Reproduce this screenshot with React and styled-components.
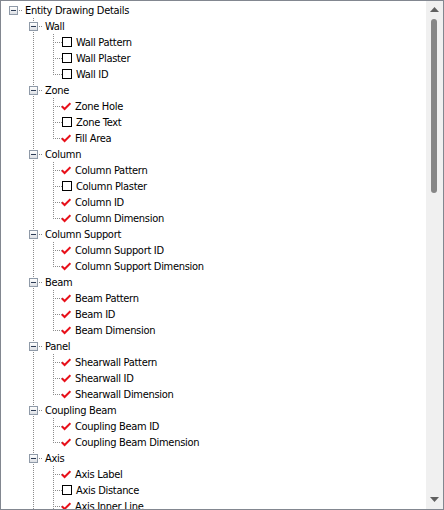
import React from "react";
import styled, { createGlobalStyle, css } from "styled-components";

const tree = {
	label: "Entity Drawing Details",
	children: [
		{
			label: "Wall",
			children: [
				{ label: "Wall Pattern", checked: false },
				{ label: "Wall Plaster", checked: false },
				{ label: "Wall ID", checked: false },
			],
		},
		{
			label: "Zone",
			children: [
				{ label: "Zone Hole", checked: true },
				{ label: "Zone Text", checked: false },
				{ label: "Fill Area", checked: true },
			],
		},
		{
			label: "Column",
			children: [
				{ label: "Column Pattern", checked: true },
				{ label: "Column Plaster", checked: false },
				{ label: "Column ID", checked: true },
				{ label: "Column Dimension", checked: true },
			],
		},
		{
			label: "Column Support",
			children: [
				{ label: "Column Support ID", checked: true },
				{ label: "Column Support Dimension", checked: true },
			],
		},
		{
			label: "Beam",
			children: [
				{ label: "Beam Pattern", checked: true },
				{ label: "Beam ID", checked: true },
				{ label: "Beam Dimension", checked: true },
			],
		},
		{
			label: "Panel",
			children: [
				{ label: "Shearwall Pattern", checked: true },
				{ label: "Shearwall ID", checked: true },
				{ label: "Shearwall Dimension", checked: true },
			],
		},
		{
			label: "Coupling Beam",
			children: [
				{ label: "Coupling Beam ID", checked: true },
				{ label: "Coupling Beam Dimension", checked: true },
			],
		},
		{
			label: "Axis",
			children: [
				{ label: "Axis Label", checked: true },
				{ label: "Axis Distance", checked: false },
				{ label: "Axis Inner Line", checked: true },
				{ label: "Axis Bubble", checked: true },
			],
		},
		{
			label: "Dimension",
			children: [{ label: "Dimension Text", checked: true }],
		},
	],
};

// flatten the tree into rows, remembering which ancestors still have siblings below
const flatten = (node, depth = 0, lasts = [], isLast = true, out = []) => {
	out.push({ node, depth, lasts, isLast });
	(node.children || []).forEach((child, i, arr) => {
		const last = i === arr.length - 1;
		flatten(child, depth + 1, depth === 0 ? [] : [...lasts, isLast], last, out);
	});
	return out;
};

const GlobalStyle = createGlobalStyle`
	html, body {
		margin: 0;
		padding: 0;
		background: #ffffff;
	}
	body {
		font-family: "DejaVu Sans Condensed", "Liberation Sans", sans-serif;
	}
`;

const DOT = "#8c8c8c";

const Frame = styled.div`
	width: 444px;
	height: 510px;
	box-sizing: border-box;
	border: 1px solid #828790;
	display: flex;
	background: #ffffff;
	overflow: hidden;
`;

const Tree = styled.div`
	flex: 1;
	display: flex;
	flex-direction: column;
	padding: 1px 0 0 2px;
	overflow: hidden;
`;

const Row = styled.div`
	display: flex;
	align-items: center;
	height: 16px;
	flex-shrink: 0;
	white-space: nowrap;
`;

const vertical = css`
	content: "";
	position: absolute;
	left: 10px;
	width: 1px;
	background-image: linear-gradient(${DOT} 50%, transparent 50%);
	background-size: 1px 2px;
`;

const Cell = styled.div`
	position: relative;
	width: 20px;
	height: 16px;
	flex-shrink: 0;

	&::before {
		${({ $line }) => ($line ? vertical : "display: none;")}
		top: 0;
		height: ${({ $line }) => ($line === "half" ? "9px" : "16px")};
	}

	&::after {
		content: "";
		display: ${({ $right }) => ($right ? "block" : "none")};
		position: absolute;
		top: 8px;
		left: 11px;
		width: 9px;
		height: 1px;
		background-image: linear-gradient(to right, transparent 50%, ${DOT} 50%);
		background-size: 2px 1px;
	}
`;

const Expander = styled.div`
	position: absolute;
	left: 6px;
	top: 4px;
	width: 9px;
	height: 9px;
	box-sizing: border-box;
	border: 1px solid #8f9aa8;
	background: linear-gradient(#ffffff, #dcdfe4);
	z-index: 1;

	&::after {
		content: "";
		position: absolute;
		left: 1px;
		top: 3px;
		width: 5px;
		height: 1px;
		background: #2d3c55;
	}
`;

const CheckBox = styled.div`
	width: 10px;
	height: 10px;
	box-sizing: border-box;
	margin-left: -1px;
	border: 1px solid #000000;
	background: #ffffff;
	flex-shrink: 0;
`;

const Tick = styled.svg`
	width: 10px;
	height: 10px;
	margin-left: -2px;
	flex-shrink: 0;
`;

const Label = styled.span`
	font-size: 11px;
	letter-spacing: -0.3px;
	color: #000000;
	line-height: 15px;
	padding-top: 1px;
	margin-left: ${({ $leaf }) => ($leaf ? "4px" : "2px")};
`;

const ScrollBar = styled.div`
	width: 17px;
	flex-shrink: 0;
	background: #f0f0f0;
	display: flex;
	flex-direction: column;
`;

const ArrowButton = styled.div`
	height: 17px;
	flex-shrink: 0;
	display: flex;
	justify-content: center;
	align-items: flex-start;
	padding-top: ${({ $down }) => ($down ? "5px" : "6px")};
	box-sizing: border-box;
`;

const Track = styled.div`
	flex: 1;
	padding: 1px 0 0 5px;
`;

const Thumb = styled.div`
	width: 6px;
	height: 174px;
	border-radius: 3px;
	background: #868686;
`;

const Arrow = ({ down }) => (
	<svg width="9" height="5" viewBox="0 0 9 5">
		<polygon
			points={down ? "0,0 9,0 4.5,5" : "4.5,0 9,5 0,5"}
			fill="#606060"
		/>
	</svg>
);

const TreeRow = ({ node, depth, lasts, isLast }) => {
	const hasKids = !!node.children;
	const guides = [];

	// the root column has no line of its own
	if (depth > 0) guides.push(<Cell key="root" />);
	lasts.forEach((last, i) => {
		guides.push(<Cell key={i} $line={last ? undefined : "full"} />);
	});

	const own =
		depth === 0 ? (
			<Cell key="own" $right>
				<Expander />
			</Cell>
		) : (
			<Cell key="own" $line={isLast ? "half" : "full"} $right>
				{hasKids && <Expander />}
			</Cell>
		);

	return (
		<Row>
			{guides}
			{own}
			{!hasKids &&
				(node.checked ? (
					<Tick viewBox="0 0 10 10">
						<path
							d="M0.8 5.2 L3.6 8 L9.4 2.2"
							fill="none"
							stroke="#e8101a"
							strokeWidth="2"
						/>
					</Tick>
				) : (
					<CheckBox />
				))}
			<Label $leaf={!hasKids}>{node.label}</Label>
		</Row>
	);
};

export default function App() {
	const rows = flatten(tree);
	return (
		<>
			<GlobalStyle />
			<Frame>
				<Tree>
					{rows.map((r, i) => (
						<TreeRow key={i} {...r} />
					))}
				</Tree>
				<ScrollBar>
					<ArrowButton>
						<Arrow />
					</ArrowButton>
					<Track>
						<Thumb />
					</Track>
					<ArrowButton $down>
						<Arrow down />
					</ArrowButton>
				</ScrollBar>
			</Frame>
		</>
	);
}
